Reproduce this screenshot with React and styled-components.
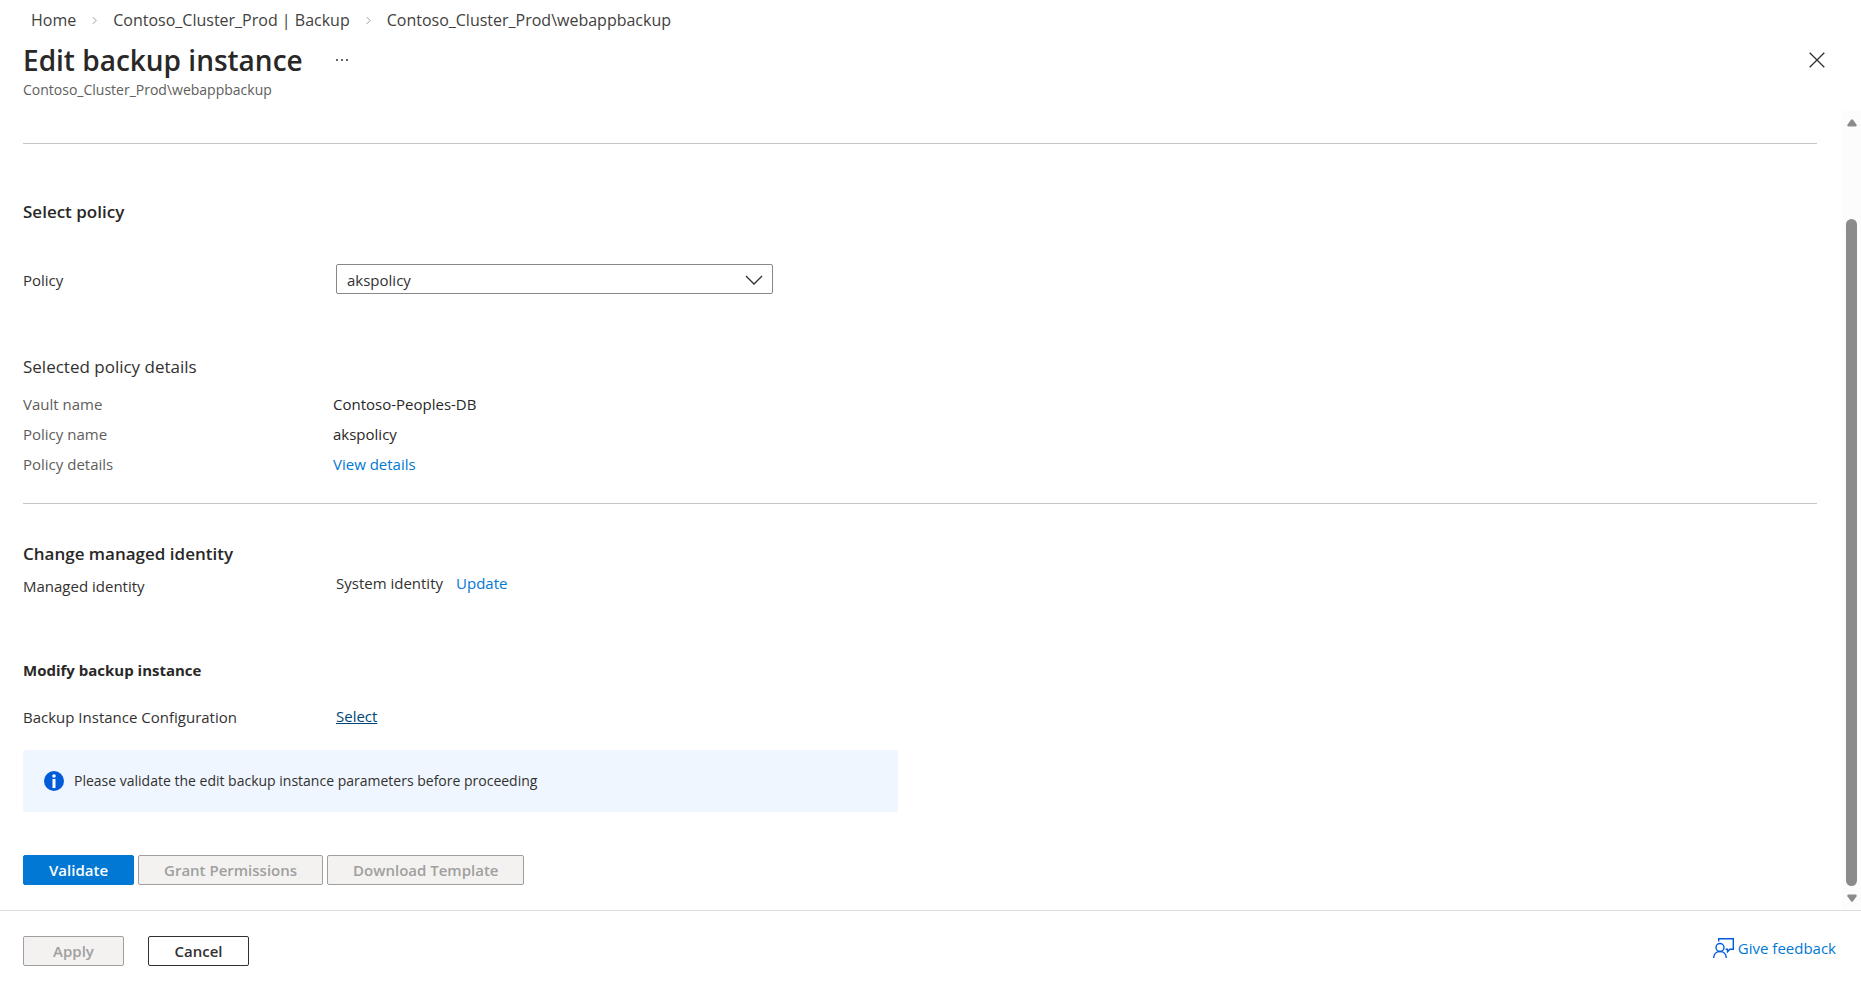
import React from 'react';
import styled, { createGlobalStyle } from 'styled-components';

const policyDetails = [
  { label: 'Vault name', value: 'Contoso-Peoples-DB' },
  { label: 'Policy name', value: 'akspolicy' },
  { label: 'Policy details', value: 'View details', link: true },
];

const Crumb = () => (
  <CrumbArrow viewBox="0 0 6 10" aria-hidden="true">
    <path d="M1 1l4 4-4 4" />
  </CrumbArrow>
);

const App = () => {
  return (
    <Page>
      <GlobalStyle />
      <Header>
        <Breadcrumb aria-label="Breadcrumb">
          <CrumbLink href="#home">Home</CrumbLink>
          <Crumb />
          <CrumbLink href="#backup">Contoso_Cluster_Prod | Backup</CrumbLink>
          <Crumb />
          <CrumbLink href="#instance">Contoso_Cluster_Prod\webappbackup</CrumbLink>
        </Breadcrumb>
        <TitleRow>
          <Title>Edit backup instance</Title>
          <IconBtn type="button" aria-label="More">
            <svg width="14" height="4" viewBox="0 0 14 4" fill="#323130">
              <rect x="1" y="1" width="2" height="2" rx="1" />
              <rect x="6" y="1" width="2" height="2" rx="1" />
              <rect x="11" y="1" width="2" height="2" rx="1" />
            </svg>
          </IconBtn>
          <CloseBtn type="button" aria-label="Close">
            <svg width="16" height="16" viewBox="0 0 16 16" stroke="#323130" strokeWidth="1.3">
              <path d="M.7.7l14.6 14.6M15.3.7L.7 15.3" />
            </svg>
          </CloseBtn>
        </TitleRow>
        <Subtitle>Contoso_Cluster_Prod\webappbackup</Subtitle>
      </Header>

      <Body>
        <Content>
          <Section $top={32}>
            <Divider />
          </Section>

          <Section $top={56}>
            <Heading>Select policy</Heading>
          </Section>
          <Section $top={39}>
            <Row>
              <Label as="label" htmlFor="policy">Policy</Label>
              <SelectWrap>
                <Select id="policy" defaultValue="akspolicy">
                  <option value="akspolicy">akspolicy</option>
                </Select>
                <SelectArrow viewBox="0 0 18 10" aria-hidden="true">
                  <path d="M1 1l8 8 8-8" />
                </SelectArrow>
              </SelectWrap>
            </Row>
          </Section>

          <Section $top={60}>
            <SubHeading>Selected policy details</SubHeading>
            <Details>
              {policyDetails.map(({ label, value, link }) => (
                <DetailRow key={label}>
                  <Term>{label}</Term>
                  <Value>{link ? <Link href="#details">{value}</Link> : value}</Value>
                </DetailRow>
              ))}
            </Details>
            <Divider />
          </Section>

          <Section $top={38}>
            <Heading>Change managed identity</Heading>
            <Row $top={3}>
              <Label>Managed identity</Label>
              <Identity>
                System identity
                <Link href="#update">Update</Link>
              </Identity>
            </Row>
          </Section>

          <Section $top={57}>
            <Heading $small>Modify backup instance</Heading>
          </Section>
          <Section $top={18}>
            <Row>
              <Label>Backup Instance Configuration</Label>
              <SelectLink href="#select">Select</SelectLink>
            </Row>
          </Section>

          <InfoBar role="status">
            <svg width="20" height="20" viewBox="0 0 20 20" aria-hidden="true">
              <circle cx="10" cy="10" r="10" fill="#015cda" />
              <circle cx="10" cy="5" r="1.8" fill="#fff" />
              <rect x="8.5" y="8" width="3" height="9" fill="#fff" />
            </svg>
            Please validate the edit backup instance parameters before proceeding
          </InfoBar>

          <Actions>
            <Btn type="button" $primary>Validate</Btn>
            <Btn type="button" disabled>Grant Permissions</Btn>
            <Btn type="button" disabled>Download Template</Btn>
          </Actions>
        </Content>

        <ScrollTrack aria-hidden="true">
          <svg width="10" height="8" viewBox="0 0 10 8" fill="#8b8b8b">
            <path d="M4 .8Q5-.4 6 .8l3.6 5Q10 7.500 8.500 7.500h-7Q0 7.500.4 5.800z" />
          </svg>
          <ScrollGap $size={92} />
          <ScrollThumb />
          <ScrollGap $size={8} />
          <svg width="10" height="8" viewBox="0 0 10 8" fill="#8b8b8b">
            <path d="M4 7.200Q5 8.400 6 7.200l3.600-5Q10 .5 8.500.5h-7Q0 .5.4 2.200z" />
          </svg>
        </ScrollTrack>
      </Body>

      <Footer>
        <Btn type="button" disabled $wide>Apply</Btn>
        <Btn type="button" $wide>Cancel</Btn>
        <Feedback href="#feedback">
          <svg width="21" height="20" viewBox="0 0 21 20" fill="none" stroke="#015cda" strokeWidth="1.4" aria-hidden="true">
            <circle cx="7" cy="9.500" r="4" />
            <path d="M.7 20c0-4 2.800-6.500 6.300-6.500s6.300 2.500 6.300 6.500" />
            <path d="M5.700 3.500V.7h14.600v10.600h-3.300L14.500 13.800v-2.500h-2" />
          </svg>
          Give feedback
        </Feedback>
      </Footer>
    </Page>
  );
};

const GlobalStyle = createGlobalStyle`
* { box-sizing: border-box; }
body {
  margin: 0;
  background: #fff;
  color: #323130;
  font-family: 'Open Sans', 'Noto Sans', sans-serif;
  font-size: 15px;
  line-height: 20px;
}
a { text-decoration: none; }
h1, h2, h3, p, dl, dd { margin: 0; }
button, select { font: inherit; }
`

const Page = styled.div`
display: flex;
flex-direction: column;
min-height: 100vh;
`

const Header = styled.header`
padding: 8px 36px 11px 23px;
`

const Breadcrumb = styled.nav`
display: flex;
align-items: center;
gap: 16px;
padding-left: 8px;
font-size: 16px;
line-height: 24px;
`

const CrumbLink = styled.a`
color: #424140;
`

const CrumbArrow = styled.svg`
width: 5px;
height: 9px;
fill: none;
stroke: #8a8886;
`

const TitleRow = styled.div`
display: flex;
align-items: center;
gap: 32px;
margin-top: 8px;
`

const Title = styled.h1`
color: #292827;
font-size: 28px;
font-weight: 600;
line-height: 40px;
`

const IconBtn = styled.button`
display: flex;
padding: 8px 0;
border: 0;
background: none;
cursor: pointer;
`

const CloseBtn = styled(IconBtn)`
margin-left: auto;
margin-right: -8px;
padding: 8px;
`

const Subtitle = styled.p`
color: #605e5c;
font-size: 14px;
line-height: 20px;
`

const Body = styled.main`
display: flex;
flex: 1;
`

const Content = styled.div`
flex: 1;
padding: 0 25px 24px 23px;
`

const Section = styled.section`
margin-top: ${props => props.$top}px;
`

const Divider = styled.hr`
height: 1px;
margin: 0;
border: 0;
background: #c8c6c4;
`

const Heading = styled.h2`
color: #292827;
font-size: ${props => props.$small ? '15px' : '17px'};
font-weight: ${props => props.$small ? 700 : 600};
line-height: 24px;
`

const SubHeading = styled.h3`
font-size: 17px;
font-weight: 400;
line-height: 24px;
`

const Row = styled.div`
display: grid;
grid-template-columns: 313px minmax(0, 1fr);
align-items: center;
margin-top: ${props => props.$top || 0}px;
`

const Label = styled.span`
padding-top: 2px;
line-height: 30px;
`

const SelectWrap = styled.div`
position: relative;
max-width: 437px;
`

const Select = styled.select`
display: block;
width: 100%;
height: 30px;
padding: 2px 40px 0 10px;
border: 1px solid #8a8886;
border-radius: 2px;
background: #fff;
color: #323130;
appearance: none;
`

const SelectArrow = styled.svg`
position: absolute;
top: 11px;
right: 10px;
width: 18px;
height: 10px;
fill: none;
stroke: #323130;
stroke-width: 1.3;
pointer-events: none;
`

const Details = styled.dl`
padding: 10px 0 24px;
`

const DetailRow = styled.div`
display: grid;
grid-template-columns: 310px minmax(0, 1fr);
line-height: 30px;
`

const Term = styled.dt`
color: #605e5c;
`

const Value = styled.dd`
color: #292827;
`

const Link = styled.a`
color: #0078d4;
`

const SelectLink = styled.a`
justify-self: start;
color: #004578;
text-decoration: underline;
`

const Identity = styled.div`
display: flex;
align-self: start;
gap: 13px;
line-height: 28px;
`

const InfoBar = styled.div`
display: flex;
align-items: center;
gap: 10px;
max-width: 875px;
min-height: 62px;
margin-top: 18px;
padding: 0 21px;
border-radius: 2px;
background: #eff6ff;
font-size: 14px;
`

const Actions = styled.div`
display: flex;
gap: 4px;
margin-top: 43px;
`

const Btn = styled.button`
height: 30px;
min-width: ${props => props.$wide ? '101px' : '0'};
padding: 0 25px;
border: 1px solid ${props => props.$primary ? '#0078d4' : '#323130'};
border-radius: 2px;
background: ${props => props.$primary ? '#0078d4' : '#fff'};
color: ${props => props.$primary ? '#fff' : '#323130'};
font-weight: 600;
line-height: 20px;
cursor: pointer;

&:disabled {
  border-color: #a19f9d;
  background: #f3f2f1;
  color: #a19f9d;
  cursor: default;
}
`

const ScrollTrack = styled.div`
display: flex;
flex-direction: column;
align-items: center;
width: 19px;
padding: 8px 0;
background: #fcfcfc;
`

const ScrollGap = styled.div`
flex: ${props => props.$size};
`

const ScrollThumb = styled.div`
flex: 669;
width: 11px;
border-radius: 6px;
background: #8b8b8b;
`

const Footer = styled.footer`
display: flex;
align-items: center;
gap: 24px;
min-height: 89px;
padding: 0 25px 8px 23px;
border-top: 1px solid #e1dfdd;
`

const Feedback = styled.a`
display: flex;
align-items: center;
gap: 4px;
margin-left: auto;
padding-bottom: 6px;
color: #0078d4;
`

export default App;
